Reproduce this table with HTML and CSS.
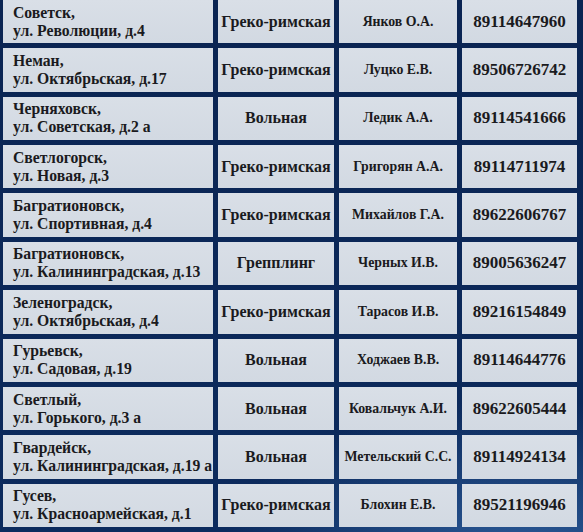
FILE: index.html
```html
<!DOCTYPE html>
<html lang="ru">
<head>
<meta charset="utf-8">
<link rel="stylesheet" href="styles.css">
</head>
<body>
<div class="page">
  <div class="table">
    <div class="cell addr">Советск,<br>ул. Революции, д.4</div>
    <div class="cell style">Греко-римская</div>
    <div class="cell coach">Янков О.А.</div>
    <div class="cell phone">89114647960</div>

    <div class="cell addr">Неман,<br>ул. Октябрьская, д.17</div>
    <div class="cell style">Греко-римская</div>
    <div class="cell coach">Луцко Е.В.</div>
    <div class="cell phone">89506726742</div>

    <div class="cell addr">Черняховск,<br>ул. Советская, д.2 а</div>
    <div class="cell style">Вольная</div>
    <div class="cell coach">Ледик А.А.</div>
    <div class="cell phone">89114541666</div>

    <div class="cell addr">Светлогорск,<br>ул. Новая, д.3</div>
    <div class="cell style">Греко-римская</div>
    <div class="cell coach">Григорян А.А.</div>
    <div class="cell phone">89114711974</div>

    <div class="cell addr">Багратионовск,<br>ул. Спортивная, д.4</div>
    <div class="cell style">Греко-римская</div>
    <div class="cell coach">Михайлов Г.А.</div>
    <div class="cell phone">89622606767</div>

    <div class="cell addr">Багратионовск,<br>ул. Калининградская, д.13</div>
    <div class="cell style">Грепплинг</div>
    <div class="cell coach">Черных И.В.</div>
    <div class="cell phone">89005636247</div>

    <div class="cell addr">Зеленоградск,<br>ул. Октябрьская, д.4</div>
    <div class="cell style">Греко-римская</div>
    <div class="cell coach">Тарасов И.В.</div>
    <div class="cell phone">89216154849</div>

    <div class="cell addr">Гурьевск,<br>ул. Садовая, д.19</div>
    <div class="cell style">Вольная</div>
    <div class="cell coach">Ходжаев В.В.</div>
    <div class="cell phone">89114644776</div>

    <div class="cell addr">Светлый,<br>ул. Горького, д.3 а</div>
    <div class="cell style">Вольная</div>
    <div class="cell coach">Ковальчук А.И.</div>
    <div class="cell phone">89622605444</div>

    <div class="cell addr">Гвардейск,<br>ул. Калининградская, д.19 а</div>
    <div class="cell style">Вольная</div>
    <div class="cell coach">Метельский С.С.</div>
    <div class="cell phone">89114924134</div>

    <div class="cell addr">Гусев,<br>ул. Красноармейская, д.1</div>
    <div class="cell style">Греко-римская</div>
    <div class="cell coach">Блохин Е.В.</div>
    <div class="cell phone">89521196946</div>
  </div>
</div>
</body>
</html>
```

FILE: styles.css
```css
html, body {
  margin: 0;
  padding: 0;
}
body {
  width: 583px;
  height: 532px;
  overflow: hidden;
  background: #0b2858;
}
.page {
  width: 583px;
  height: 532px;
  box-sizing: border-box;
  padding: 0 6px 5px 3px;
  background:
    radial-gradient(ellipse 300px 160px at 520px 560px, rgba(70,130,200,0.55), rgba(70,130,200,0) 100%),
    linear-gradient(180deg, #0a2452 0%, #0c2b5e 100%);
}
.table {
  display: grid;
  grid-template-columns: 210px 116px 118px 1fr;
  grid-template-rows: repeat(11, 1fr);
  gap: 5px;
  height: 527px;
  font-family: "Liberation Serif", "DejaVu Serif", serif;
  font-weight: bold;
  color: #1a1a20;
}
.cell {
  background: linear-gradient(180deg, #d9dfe7 0%, #d2d9e2 100%);
  display: flex;
  align-items: center;
  justify-content: center;
  text-align: center;
}
.addr {
  justify-content: flex-start;
  text-align: left;
  padding-left: 10px;
  font-size: 15.7px;
  line-height: 18px;
  white-space: nowrap;
}
.style {
  font-size: 16px;
}
.coach {
  font-size: 13.8px;
}
.phone {
  font-size: 17px;
}
```
